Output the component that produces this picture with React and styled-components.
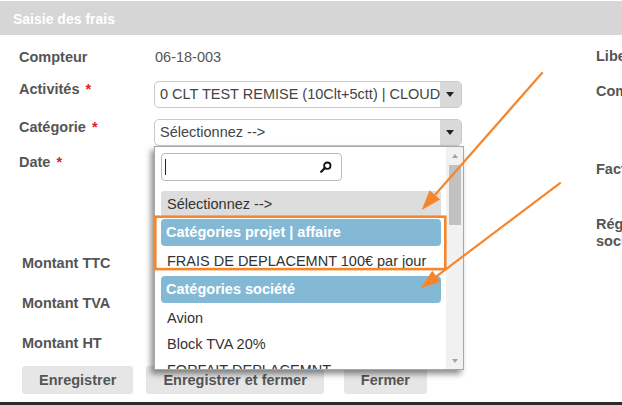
import React from "react";
import styled, { createGlobalStyle } from "styled-components";

const Global = createGlobalStyle`
  html, body { margin: 0; padding: 0; background: #fff; }
  body { font-family: "Liberation Sans", Arial, sans-serif; }
  #root { width: 622px; height: 405px; overflow: hidden; }
`;

const Page = styled.div`
  position: relative;
  width: 622px;
  height: 405px;
  box-sizing: border-box;
  overflow: hidden;
  display: flex;
  flex-direction: column;
  background: #fff;
  padding-top: 1px;
  border-bottom: 3px solid #2b2b2b;
`;

const Header = styled.div`
  flex: none;
  height: 34px;
  box-sizing: border-box;
  padding: 2px 0 0 13px;
  display: flex;
  align-items: center;
  background: #d6d6d6;
  color: #fff;
  font-weight: bold;
  font-size: 14px;
`;

const Body = styled.div`
  flex: 1;
  display: flex;
  min-height: 0;
`;

const LeftCol = styled.div`
  flex: none;
  width: 596px;
  box-sizing: border-box;
  padding-left: 19px;
  display: flex;
  flex-direction: column;
`;

const RightCol = styled.div`
  flex: none;
  display: flex;
  flex-direction: column;
  white-space: nowrap;
`;

const SideLabel = styled.div`
  margin-top: ${(p) => p.$mt}px;
  font-size: 14.5px;
  font-weight: bold;
  color: #555;
  line-height: ${(p) => p.$lh || 17}px;
`;

const Row = styled.div`
  display: flex;
  align-items: ${(p) => (p.$center ? "center" : "flex-start")};
  margin-top: ${(p) => p.$mt || 0}px;
  height: ${(p) => p.$h}px;
  padding-left: ${(p) => p.$pl || 0}px;
  flex: none;
`;

const Label = styled.div`
  width: 136px;
  flex: none;
  font-size: 14.5px;
  font-weight: bold;
  color: #555;
  line-height: 17px;
  white-space: nowrap;
`;

const Req = styled.span`
  color: #e02020;
  margin-left: 6px;
  font-weight: bold;
`;

const Value = styled.div`
  font-size: 14.5px;
  color: #555;
`;

const SelectWrap = styled.div`
  position: relative;
  margin-left: -1px;
`;

const SelectBox = styled.div`
  width: 308px;
  height: 27px;
  box-sizing: border-box;
  border: 1px solid #c8c8c8;
  border-radius: 5px;
  display: flex;
  overflow: hidden;
  background: #fff;
`;

const SelectText = styled.div`
  flex: 1;
  min-width: 0;
  overflow: hidden;
  white-space: nowrap;
  padding-left: 5px;
  line-height: 25px;
  font-size: 14.5px;
  color: #444;
`;

const SelectArrow = styled.div`
  flex: none;
  width: 21px;
  background: #d9d9d9;
  display: flex;
  align-items: center;
  justify-content: center;
  &::after {
    content: "";
    border-left: 4px solid transparent;
    border-right: 4px solid transparent;
    border-top: 5px solid #222;
    margin-left: -2px;
  }
`;

const Dropdown = styled.div`
  position: absolute;
  top: 100%;
  left: 0;
  width: 310px;
  height: 224px;
  box-sizing: border-box;
  border: 1px solid #a8a8a8;
  background: #fff;
  display: flex;
  z-index: 10;
  box-shadow: -3px 4px 6px rgba(0, 0, 0, 0.45);
`;

const DropContent = styled.div`
  flex: 1;
  min-width: 0;
  overflow: hidden;
  display: flex;
  flex-direction: column;
`;

const SearchBox = styled.div`
  position: relative;
  flex: none;
  margin: 6px 0 0 6px;
  width: 181px;
  height: 28px;
  box-sizing: border-box;
  border: 1px solid #bbb;
  border-radius: 4px;
  display: flex;
  align-items: center;
  justify-content: space-between;
  padding: 0 9px 0 3px;
`;

const Caret = styled.span`
  width: 1px;
  height: 16px;
  background: #222;
`;

const OptionList = styled.div`
  margin-top: 10px;
  display: flex;
  flex-direction: column;
`;

const Option = styled.div`
  flex: none;
  margin: 0 5px 0 6px;
  height: 26px;
  line-height: 26px;
  padding-left: 6px;
  border-radius: 3px;
  font-size: 14.5px;
  color: #333;
  white-space: nowrap;
  background: ${(p) => (p.$active ? "#dddddd" : "transparent")};
`;

const GroupHeader = styled.div`
  flex: none;
  margin: 2px 5px 2px 6px;
  height: 27px;
  line-height: 27px;
  padding-left: 5px;
  border-radius: 4px;
  background: #84b9d6;
  color: #fff;
  font-weight: bold;
  font-size: 14.5px;
  white-space: nowrap;
`;

const ScrollBar = styled.div`
  flex: none;
  width: 17px;
  background: #f1f1f1;
  display: flex;
  flex-direction: column;
  align-items: center;
`;

const ScrollBtn = styled.div`
  flex: none;
  height: 17px;
  width: 100%;
  display: flex;
  align-items: center;
  justify-content: center;
  &::after {
    content: "";
    border-left: 3.5px solid transparent;
    border-right: 3.5px solid transparent;
    ${(p) =>
      p.$down
        ? "border-top: 4px solid #a3a3a3;"
        : "border-bottom: 4px solid #a3a3a3;"}
  }
`;

const ScrollTrack = styled.div`
  flex: 1;
  width: 100%;
`;

const Thumb = styled.div`
  margin: 1px auto 0;
  width: 12px;
  height: 60px;
  background: #c1c1c1;
`;

const Buttons = styled.div`
  display: flex;
  margin-top: 3px;
  padding-left: 3px;
`;

const Button = styled.button`
  height: 28px;
  margin-left: ${(p) => p.$ml || 0}px;
  padding: 0 17px;
  border: none;
  border-radius: 3px;
  background: #e6e6e6;
  color: #555;
  font-family: "Liberation Sans", Arial, sans-serif;
  font-weight: bold;
  font-size: 14.5px;
  white-space: nowrap;
`;

const Overlay = styled.svg`
  position: absolute;
  left: 0;
  top: 0;
  width: 622px;
  height: 405px;
  pointer-events: none;
  z-index: 20;
`;

const ORANGE = "#f6862c";

function Arrow({ from, to }) {
  const dx = to[0] - from[0];
  const dy = to[1] - from[1];
  const len = Math.hypot(dx, dy);
  const ux = dx / len;
  const uy = dy / len;
  const L = 20;
  const W = 7;
  const bx = to[0] - L * ux;
  const by = to[1] - L * uy;
  const nx = -uy;
  const ny = ux;
  const pts = `${to[0]},${to[1]} ${bx + W * nx},${by + W * ny} ${bx - W * nx},${by - W * ny}`;
  return (
    <g>
      <line x1={from[0]} y1={from[1]} x2={bx} y2={by} stroke={ORANGE} strokeWidth="2.2" />
      <polygon points={pts} fill={ORANGE} />
    </g>
  );
}

function SearchIcon() {
  return (
    <svg width="12" height="12" viewBox="0 0 12 12">
      <circle cx="7.3" cy="4.7" r="3.2" fill="none" stroke="#111" strokeWidth="1.8" />
      <line x1="5" y1="7" x2="1.2" y2="10.8" stroke="#111" strokeWidth="2.2" strokeLinecap="round" />
    </svg>
  );
}

export default function App() {
  return (
    <>
      <Global />
      <Page>
        <Header>Saisie des frais</Header>
        <Body>
          <LeftCol>
            <Row $mt={10} $h={24} $center>
              <Label>Compteur</Label>
              <Value>06-18-003</Value>
            </Row>
            <Row $mt={12} $h={27}>
              <Label>
                Activités<Req>*</Req>
              </Label>
              <SelectWrap>
                <SelectBox>
                  <SelectText>0 CLT TEST REMISE (10Clt+5ctt) | CLOUD</SelectText>
                  <SelectArrow />
                </SelectBox>
              </SelectWrap>
            </Row>
            <Row $mt={11} $h={27}>
              <Label>
                Catégorie<Req>*</Req>
              </Label>
              <SelectWrap>
                <SelectBox>
                  <SelectText>Sélectionnez --&gt;</SelectText>
                  <SelectArrow />
                </SelectBox>
                <Dropdown>
                  <DropContent>
                    <SearchBox>
                      <Caret />
                      <SearchIcon />
                    </SearchBox>
                    <OptionList>
                      <Option $active>Sélectionnez --&gt;</Option>
                      <GroupHeader>Catégories projet | affaire</GroupHeader>
                      <Option>FRAIS DE DEPLACEMNT 100€ par jour</Option>
                      <GroupHeader>Catégories société</GroupHeader>
                      <Option>Avion</Option>
                      <Option>Block TVA 20%</Option>
                      <Option>FORFAIT DEPLACEMNT</Option>
                    </OptionList>
                  </DropContent>
                  <ScrollBar>
                    <ScrollBtn />
                    <ScrollTrack>
                      <Thumb />
                    </ScrollTrack>
                    <ScrollBtn $down />
                  </ScrollBar>
                </Dropdown>
              </SelectWrap>
            </Row>
            <Row $mt={8} $h={89}>
              <Label>
                Date<Req>*</Req>
              </Label>
            </Row>
            <Row $h={40} $pl={3} $center>
              <Label>Montant TTC</Label>
            </Row>
            <Row $h={40} $pl={3} $center>
              <Label>Montant TVA</Label>
            </Row>
            <Row $h={40} $pl={3} $center>
              <Label>Montant HT</Label>
            </Row>
            <Buttons>
              <Button>Enregistrer</Button>
              <Button $ml={13}>Enregistrer et fermer</Button>
              <Button $ml={20}>Fermer</Button>
            </Buttons>
          </LeftCol>
          <RightCol>
            <SideLabel $mt={13}>Libellé</SideLabel>
            <SideLabel $mt={18}>Commentaire</SideLabel>
            <SideLabel $mt={61}>Facturable</SideLabel>
            <SideLabel $mt={38} $lh={16.5}>
              Réglé par la
              <br />
              société
            </SideLabel>
          </RightCol>
        </Body>
        <Overlay viewBox="0 0 622 405">
          <rect x="155.3" y="216.7" width="290" height="52.4" fill="none" stroke={ORANGE} strokeWidth="2.6" />
          <Arrow from={[542.7, 72.3]} to={[421.7, 210]} />
          <Arrow from={[560.7, 182.7]} to={[420.5, 288.3]} />
        </Overlay>
      </Page>
    </>
  );
}
